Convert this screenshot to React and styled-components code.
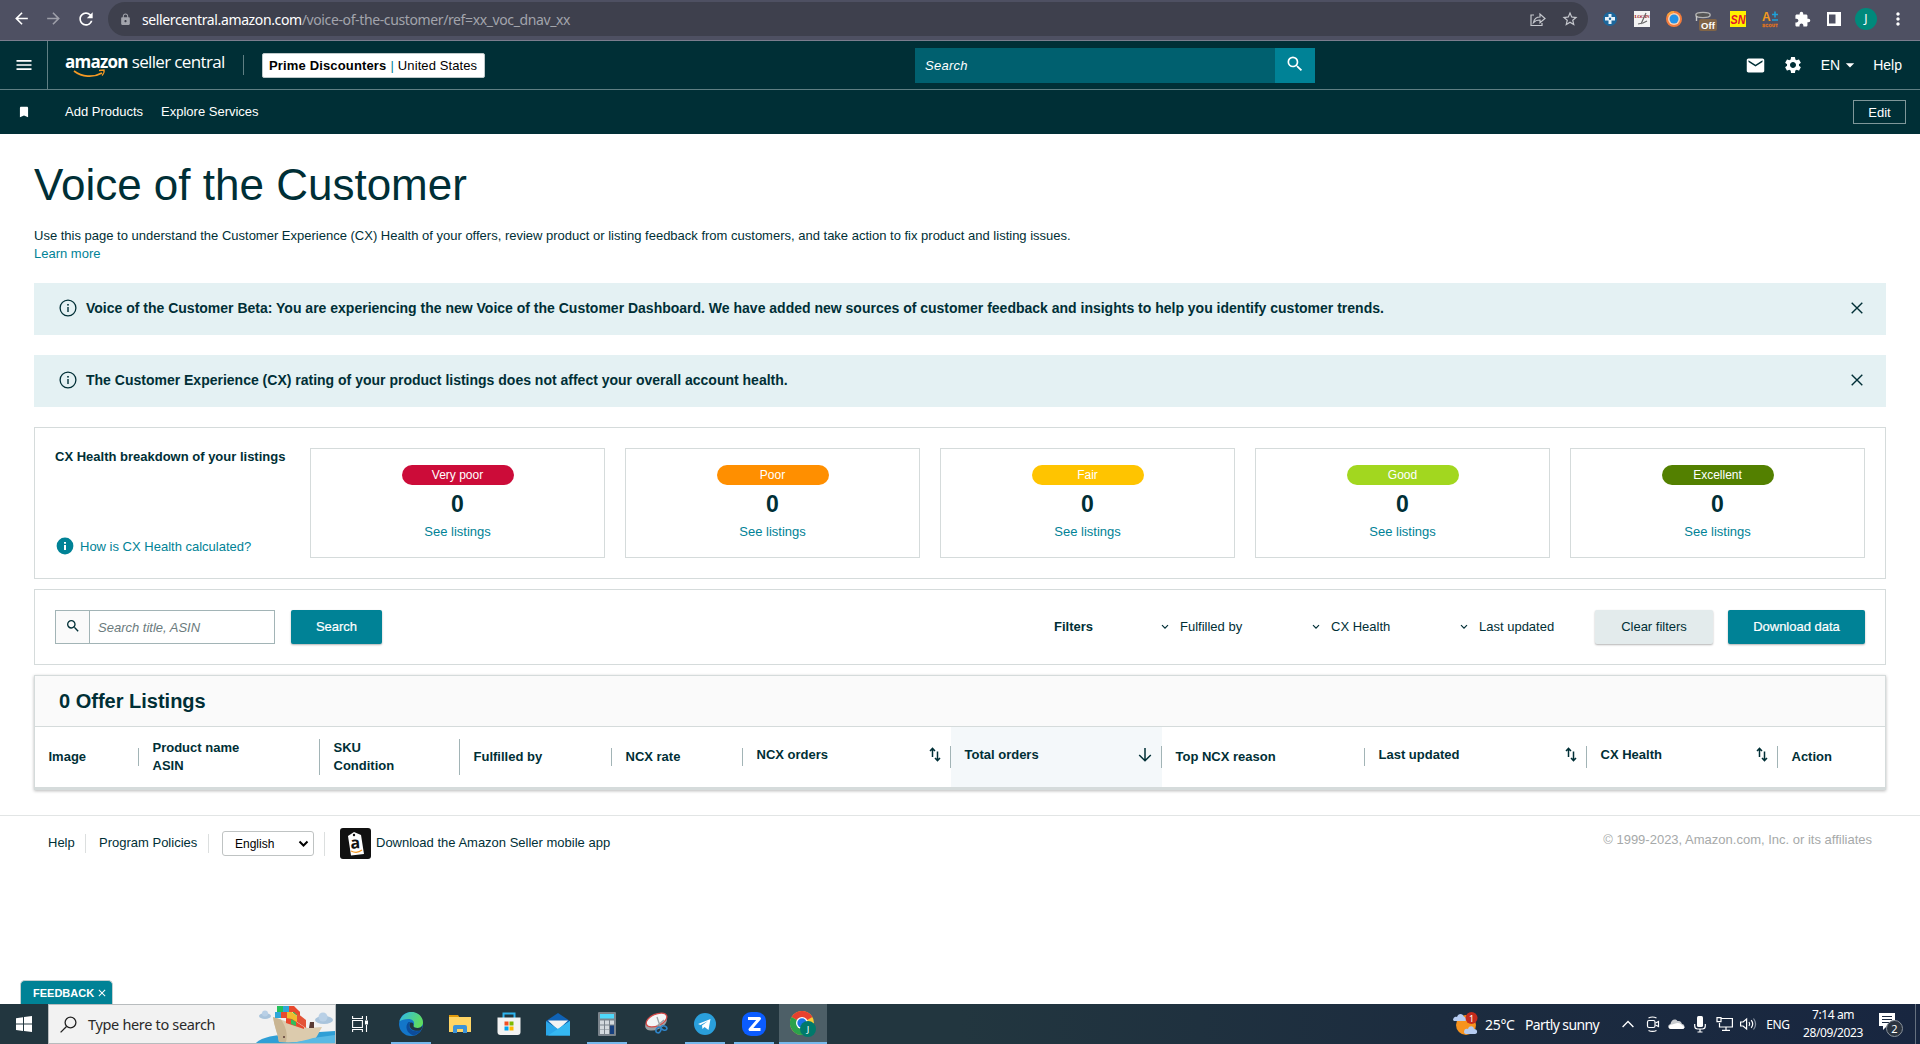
import React from 'react';
import styled, { createGlobalStyle } from 'styled-components';
import {
  MdArrowBack, MdArrowForward, MdRefresh, MdLock, MdStarBorder, MdExtension, MdMoreVert,
  MdMenu, MdBookmark, MdMail, MdSettings, MdSearch, MdArrowDropDown, MdClose,
} from 'react-icons/md';

const Global = createGlobalStyle`
  * { box-sizing: border-box; }
  body { margin: 0; background: #fff; }
  button, input, select { font: inherit; margin: 0; }
  svg { display: block; flex: none; }
`;

const ink = '#002f36';
const teal = '#008296';
const line = '#d5dbdb';
const ui = `"Noto Sans", "Open Sans", sans-serif`;

const Screen = styled.div`
  width: 1920px;
  height: 1044px;
  display: flex;
  flex-direction: column;
  overflow: hidden;
  background: #fff;
  font-family: "Liberation Sans", Arial, sans-serif;
  font-size: 13px;
  color: ${ink};
`;

const T = styled.span`
  white-space: nowrap;
  letter-spacing: ${(p) => p.$ls || 0}px;
  font-weight: ${(p) => (p.$b ? 700 : 'inherit')};
`;

/* ---------- browser bar ---------- */
const BrowserBar = styled.div`
  height: 41px;
  flex: none;
  background: #4e5062;
  border-bottom: 1px solid #7b7d8e;
  display: flex;
  align-items: center;
  padding: 0 0 2px 12px;
  color: #fff;
`;
const NavIcons = styled.div`
  display: flex;
  gap: 13px;
  width: 96px;
`;
const NavIcon = styled.span`
  opacity: ${(p) => (p.$dim ? 0.45 : 1)};
`;
const UrlBar = styled.div`
  width: 1480px;
  flex: none;
  height: 34px;
  border-radius: 17px;
  background: #3e404d;
  display: flex;
  align-items: center;
  padding: 0 9px 0 11px;
  color: #a2a4ac;
  font-family: ${ui};
  font-size: 14px;
`;
const Url = styled.div`
  flex: 1;
  margin-left: 10px;
  white-space: nowrap;
  letter-spacing: ${(p) => p.$ls}px;
  b { font-weight: 400; color: #fff; }
`;
const UrlActions = styled.div`
  display: flex;
  gap: 14px;
  align-items: center;
  color: #c6c8ce;
`;
const Extensions = styled.div`
  flex: none;
  display: flex;
  align-items: center;
  padding-left: 6px;
`;
const Ext = styled.div`
  width: 32px;
  display: flex;
  justify-content: center;
`;
const Avatar = styled.div`
  width: 22px;
  height: 22px;
  border-radius: 50%;
  background: #00897b;
  color: #fff;
  font: 12px/22px ${ui};
  text-align: center;
`;

/* ---------- seller central header ---------- */
const Header = styled.header`
  height: 49px;
  flex: none;
  display: flex;
  align-items: center;
  background: ${ink};
  border-bottom: 1px solid #5f7f83;
  color: #fff;
`;
const MenuButton = styled.div`
  width: 48px;
  height: 48px;
  border-right: 1px solid #5f7f83;
  display: flex;
  align-items: center;
  padding-left: 14px;
`;
const Logo = styled.div`
  width: 178px;
  height: 36px;
  margin-left: 17px;
  padding-top: 1px;
  position: relative;
  font-family: "Open Sans", sans-serif;
  font-size: 17px;
  line-height: 28px;
  white-space: nowrap;
`;
const LogoWord = styled.span`
  font-weight: ${(p) => (p.$b ? 700 : 400)};
  letter-spacing: ${(p) => p.$ls}px;
  margin-right: ${(p) => (p.$b ? 4 : 0)}px;
`;
const Smile = styled.svg`
  position: absolute;
  left: 8px;
  top: 22px;
`;
const LogoDivider = styled.div`
  width: 1px;
  height: 20px;
  background: #5f7f83;
  margin-right: 18px;
`;
const Account = styled.div`
  width: 223px;
  height: 25px;
  background: #fff;
  border: 1px solid #bfc9ca;
  border-radius: 2px;
  color: #000;
  padding-left: 6px;
  line-height: 23px;
  white-space: nowrap;
  font-size: 13px;
  i { font-style: normal; color: ${teal}; margin: 0 4px 0 4px; }
`;
const TopSearch = styled.div`
  margin-left: 430px;
  width: 360px;
  height: 35px;
  background: #00606f;
  padding-left: 10px;
  font-size: 13px;
  letter-spacing: 0.25px;
  font-style: italic;
  line-height: 35px;
`;
const TopSearchButton = styled.div`
  width: 40px;
  height: 35px;
  background: ${teal};
  display: flex;
  align-items: center;
  justify-content: center;
  padding-bottom: 2px;
`;
const HeaderRight = styled.div`
  flex: 1;
  display: flex;
  align-items: center;
  justify-content: flex-end;
  padding-right: 18px;
  font-size: 14px;
`;
const HeaderIcon = styled.span`
  margin-right: ${(p) => p.$mr}px;
`;
const SubNav = styled.nav`
  height: 44px;
  flex: none;
  display: flex;
  align-items: center;
  background: ${ink};
  color: #fff;
  padding: 0 14px 0 17px;
  font-size: 13px;
`;
const SubNavLinks = styled.div`
  flex: 1;
  display: flex;
  gap: 18px;
  margin-left: 34px;
  padding-bottom: 1px;
`;
const EditButton = styled.button`
  width: 53px;
  height: 24px;
  background: transparent;
  border: 1px solid #7f9799;
  color: #fff;
  padding: 0;
  line-height: 21px;
`;

/* ---------- main ---------- */
const Main = styled.main`
  padding: 26px 34px 0;
  flex: none;
`;
const Title = styled.h1`
  margin: 0 0 17px;
  font-size: 44px;
  line-height: 50px;
  font-weight: 400;
  white-space: nowrap;
`;
const Intro = styled.p`
  margin: 0 0 20px;
  line-height: 18px;
`;
const Link = styled.a`
  color: ${teal};
  white-space: nowrap;
`;
const Alert = styled.div`
  height: 52px;
  margin-bottom: 20px;
  background: #e4f1f3;
  display: flex;
  align-items: center;
  padding: 0 23px 3px 25px;
  font-size: 14px;
  font-weight: 700;
`;
const AlertText = styled.div`
  flex: 1;
  margin-left: 9px;
  white-space: nowrap;
`;
const Panel = styled.section`
  border: 1px solid ${line};
  padding: 20px;
  display: flex;
  margin-bottom: 10px;
  height: ${(p) => p.$h}px;
`;
const Breakdown = styled.div`
  width: 255px;
  height: 110px;
  padding: 1px 0 3px;
  display: flex;
  flex-direction: column;
  justify-content: space-between;
`;
const HowLink = styled.div`
  display: flex;
  align-items: center;
  gap: 5px;
`;
const Cards = styled.div`
  flex: 1;
  display: grid;
  grid-template-columns: repeat(5, 1fr);
  gap: 20px;
`;
const Card = styled.div`
  border: 1px solid ${line};
  height: 110px;
  padding-top: 16px;
  display: flex;
  flex-direction: column;
  align-items: center;
`;
const Pill = styled.div`
  width: 112px;
  height: 20px;
  border-radius: 10px;
  background: ${(p) => p.$c};
  color: #fff;
  font-size: 12px;
  line-height: 20px;
  text-align: center;
`;
const Count = styled.div`
  font-size: 23px;
  font-weight: 700;
  line-height: 26px;
  margin: 6px 0 7px;
`;
const Button = styled.button`
  width: ${(p) => p.$w}px;
  height: 34px;
  border: 0;
  border-radius: 2px;
  padding: 0 0 1px;
  margin-left: ${(p) => p.$ml || 0}px;
  background: ${(p) => (p.$light ? '#e3ebec' : teal)};
  color: ${(p) => (p.$light ? ink : '#fff')};
  box-shadow: 0 1px 2px rgba(0, 0, 0, 0.3);
  white-space: nowrap;
  -webkit-text-stroke: ${(p) => (p.$light ? 0 : 0.2)}px #fff;
`;
const SearchField = styled.div`
  display: flex;
  width: 220px;
  height: 34px;
  border: 1px solid #a2b4b6;
  margin-right: 16px;
`;
const SearchAddon = styled.div`
  width: 34px;
  background: #fafafa;
  border-right: 1px solid #a2b4b6;
  display: flex;
  align-items: center;
  justify-content: center;
  padding-bottom: 2px;
`;
const Placeholder = styled.div`
  padding-left: 8px;
  line-height: 33px;
  font-style: italic;
  color: #6b7b7d;
  white-space: nowrap;
`;
const FilterGroup = styled.div`
  flex: 1;
  height: 33px;
  display: flex;
  align-items: center;
  justify-content: flex-end;
`;
const FilterItem = styled.div`
  width: ${(p) => p.$w}px;
  display: flex;
  align-items: center;
  gap: 11px;
`;
const Table = styled.section`
  border: 1px solid ${line};
  border-bottom-width: 3px;
  box-shadow: 0 1px 3px rgba(0, 0, 0, 0.28);
  height: 115px;
`;
const TableTitle = styled.h2`
  margin: 0;
  height: 51px;
  background: #fafafa;
  border-bottom: 1px solid ${line};
  padding-left: 24px;
  font-size: 20px;
  line-height: 51px;
`;
const Columns = styled.div`
  display: grid;
  grid-template-columns: 104px 181px 140px 152px 131px 208px 211px 203px 222px 191px 1fr;
  height: 60px;
  font-weight: 700;
`;
const Cell = styled.div`
  display: flex;
  align-items: center;
  background: ${(p) => (p.$active ? '#f4f8fa' : 'transparent')};
`;
const CellInner = styled.div`
  flex: 1;
  display: flex;
  justify-content: space-between;
  height: ${(p) => p.$h}px;
  line-height: 18px;
  padding: 0 9px 0 13.5px;
  border-right: ${(p) => (p.$last ? 0 : 1)}px solid #a2b4b6;
  white-space: pre;
`;

/* ---------- footer ---------- */
const Footer = styled.footer`
  margin-top: 25px;
  border-top: 1px solid #e2e5e5;
  padding: 11px 48px 0;
  display: flex;
  align-items: center;
  height: 45px;
  flex: none;
`;
const FootItem = styled.div`
  width: ${(p) => p.$w}px;
  height: ${(p) => p.$h || 19}px;
  line-height: 17px;
  border-right: ${(p) => (p.$bar ? 1 : 0)}px solid #dcdfdf;
  white-space: nowrap;
  margin-right: ${(p) => p.$mr || 0}px;
  margin-left: ${(p) => p.$ml || 0}px;
`;
const Language = styled.div`
  width: 92px;
  height: 25px;
  border: 1px solid #bfc3c3;
  border-radius: 3px;
  display: flex;
  align-items: center;
  justify-content: space-between;
  padding: 0 4px 0 12px;
  font-size: 12px;
  color: #000;
`;
const Copyright = styled.div`
  flex: 1;
  text-align: right;
  color: #a6a9a9;
  padding-bottom: 8px;
  white-space: nowrap;
`;
const Filler = styled.div`
  flex: 1;
  position: relative;
`;
const Feedback = styled.div`
  position: absolute;
  left: 20px;
  bottom: 0;
  width: 93px;
  height: 24px;
  background: ${teal};
  border: 1px solid #c5cfd0;
  border-bottom: 0;
  border-radius: 5px 5px 0 0;
  color: #fff;
  font-size: 11px;
  font-weight: 700;
  display: flex;
  align-items: center;
  gap: 2px;
  padding: 0 0 0 12px;
`;

/* ---------- taskbar ---------- */
const Taskbar = styled.div`
  height: 40px;
  flex: none;
  display: flex;
  background: linear-gradient(90deg, #22363f 0%, #22363f 50%, #1c2c3f 75%, #182640 100%);
  color: #fff;
  font-family: ${ui};
`;
const TaskButton = styled.div`
  width: 48px;
  height: 40px;
  display: flex;
  align-items: center;
  justify-content: center;
  margin-left: ${(p) => p.$ml || 0}px;
  position: relative;
  background: ${(p) => (p.$active ? '#4d5f67' : 'transparent')};
`;
const Running = styled.div`
  position: absolute;
  bottom: 0;
  left: ${(p) => (p.$wide ? 0 : 4)}px;
  right: ${(p) => (p.$wide ? 0 : 4)}px;
  height: 2px;
  background: #76b9ed;
`;
const TaskSearch = styled.div`
  width: 288px;
  height: 40px;
  background: #f2f2f2;
  border: 1px solid #b8bcbe;
  display: flex;
  align-items: center;
  padding-left: 11px;
  color: #2a2a2a;
  font-size: 14.5px;
  overflow: hidden;
`;
const TaskSearchText = styled.div`
  flex: 1;
  margin-left: 11px;
  white-space: nowrap;
  letter-spacing: -0.33px;
`;
const Tray = styled.div`
  margin-left: auto;
  display: flex;
  align-items: center;
  font-size: 14px;
  white-space: nowrap;
`;
const TraySlot = styled.div`
  width: ${(p) => p.$w}px;
  display: flex;
  justify-content: ${(p) => (p.$start ? 'flex-start' : 'center')};
  padding-left: ${(p) => p.$pl || 0}px;
  margin-right: ${(p) => p.$mr || 0}px;
  font-size: ${(p) => p.$fs || 14}px;
  letter-spacing: ${(p) => p.$ls || 0}px;
`;
const Clock = styled.div`
  width: 84px;
  text-align: center;
  font-size: 12px;
  line-height: 18px;
  letter-spacing: -0.4px;
`;
const ShowDesktop = styled.div`
  width: 5px;
  height: 40px;
  border-left: 1px solid #65707f;
`;

const SortIcon = () => (
  <svg width="12" height="18" viewBox="0 0 12 18" fill="none" stroke={ink} strokeWidth="1.5">
    <path d="M3.500 11V2.500M1 5l2.500-2.600L6 5M8.500 5.500v9M6 12l2.500 2.600L11 12" />
  </svg>
);
const DownIcon = () => (
  <svg width="14" height="18" viewBox="0 0 14 18" fill="none" stroke={ink} strokeWidth="1.5">
    <path d="M7 2v12.500M1.200 9L7 14.800 12.800 9" />
  </svg>
);
const Chevron = () => (
  <svg width="8" height="6" viewBox="0 0 8 6" fill="none" stroke={ink} strokeWidth="1.2"><path d="M1 1.200l3 3 3-3" /></svg>
);
const Close = () => (
  <svg width="12" height="12" viewBox="0 0 12 12" stroke={ink} strokeWidth="1.4"><path d="M.7.7l10.600 10.600M11.300.7L.7 11.300" /></svg>
);
const InfoOutline = () => (
  <svg width="18" height="18" viewBox="0 0 18 18" fill="none">
    <circle cx="9" cy="9" r="7.900" stroke={ink} strokeWidth="1.300" />
    <path d="M9 8v5" stroke={ink} strokeWidth="1.400" /><rect x="8.200" y="5" width="1.600" height="1.600" fill={ink} />
  </svg>
);
const InfoSolid = () => (
  <svg width="20" height="18" viewBox="0 0 20 18">
    <circle cx="10" cy="9" r="8.400" fill={teal} />
    <path d="M9 5h2v1.800H9zM9 8h2v5H9z" fill="#fff" />
  </svg>
);

const ShareIcon = () => (
  <svg width="18" height="16" viewBox="0 0 18 16" fill="none" stroke="currentColor" strokeWidth="1.200">
    <path d="M5 4H2v10.500h11V12M4.500 11.500c.8-4 3-5.500 6.500-5.500V3l5 4.500-5 4.200V9c-3 0-5 .8-6.500 2.500z" />
  </svg>
);

const extensions = [
  <svg width="16" height="16" viewBox="0 0 16 16">
    <circle cx="8" cy="8" r="7" fill="#1c679c" />
    <path d="M6.500 3h3v3h3.500v3.500H9.500v3.500h-3V9.500H3V6h3.500z" fill="#e8f3fa" /><circle cx="8" cy="7.800" r="1.200" fill="#1c679c" />
  </svg>,
  <svg width="16" height="16" viewBox="0 0 16 16">
    <rect width="16" height="16" fill="#f3f3f3" />
    <text x="0.500" y="7" fontSize="5" fontWeight="700" fill="#a01818" textLength="15" fontFamily="Liberation Serif, serif">LOG IN</text>
    <path d="M12 2L7 13M4 13l5-1 4-2" stroke="#666" strokeWidth="1.200" fill="none" />
  </svg>,
  <svg width="16" height="16" viewBox="0 0 16 16">
    <circle cx="8" cy="8" r="8" fill="#f47c3c" /><circle cx="8" cy="8" r="6" fill="#fbd3b5" /><circle cx="8" cy="8" r="4.500" fill="#2492e6" /><path d="M1 4a8 8 0 0 1 7-4v2a7 7 0 0 0-6 4z" fill="#f8a33c" />
  </svg>,
  <svg width="22" height="24" viewBox="0 0 22 24">
    <ellipse cx="8" cy="8" rx="7.200" ry="2.600" fill="#555" stroke="#b4b4b4" strokeWidth="1.400" />
    <path d="M1.500 9v5" stroke="#c9c9c9" strokeWidth="1.400" />
    <rect x="4" y="12" width="18" height="12" rx="2" fill="#806447" />
    <text x="6" y="21.500" fontSize="9.500" fontWeight="700" fill="#fff" textLength="14" fontFamily="Liberation Sans, sans-serif">Off</text>
  </svg>,
  <svg width="16" height="16" viewBox="0 0 16 16">
    <rect width="16" height="16" fill="#fff200" />
    <text x="0.500" y="12.500" fontSize="12" fontWeight="700" fontStyle="italic" fill="#e3142b" textLength="15" lengthAdjust="spacingAndGlyphs" fontFamily="Liberation Sans, sans-serif">SN</text>
  </svg>,
  <svg width="16" height="20" viewBox="0 0 16 20">
    <text x="0" y="12" fontSize="12" fontWeight="700" fill="#f39a1f" fontFamily="Liberation Sans, sans-serif">A</text>
    <path d="M10 5.500h6M13 2.500v6M10 11h6" stroke="#1fa0d8" strokeWidth="1.600" />
    <text x="0.300" y="17.800" fontSize="4" fontWeight="700" fill="#e0741c" stroke="#e0741c" strokeWidth="0.300" textLength="15.400" fontFamily="Liberation Sans, sans-serif">SCOUT</text>
  </svg>,
  <MdExtension size={17} />,
  <svg width="14" height="14" viewBox="0 0 14 14"><path d="M0 0h14v14H0zM2 2.500v9h6.500v-9z" fill="#fff" fillRule="evenodd" /></svg>,
  <Avatar>J</Avatar>,
  <MdMoreVert size={20} />,
];

const Ship = () => (
  <svg width="80" height="39" viewBox="0 0 80 39">
    <ellipse cx="10" cy="11" rx="6" ry="3" fill="#a9c4dc" /><circle cx="10" cy="8.500" r="3" fill="#b9d0e6" />
    <ellipse cx="69" cy="15" rx="9" ry="4" fill="#a9c4dc" /><circle cx="68" cy="12" r="4.500" fill="#b9d0e6" />
    <path d="M0 39C6 32 20 30 34 29l46-3v13z" fill="#2f9fd6" />
    <path d="M18 12l12 4 14 4 9 3 14-1c-3 5-4 8-7 12-12 3-24 4-36 3-1-8-5-16-6-25z" fill="#dccbad" />
    <path d="M18 12l8 2.500c5 7 7 15 5 22.500h-7c-1-8-5-16-6-25z" fill="#c9b593" />
    <path d="M22 1h6v6h-6zM38 2l7 5v6l-7-5z" fill="#23c15a" />
    <path d="M28 1h6v6h-6z" fill="#2ea6d9" /><path d="M34 1h5l6 6v6l-6-6h-5z" fill="#e8492e" />
    <path d="M20 7h6v6h-6z" fill="#2ea6d9" /><path d="M26 7h6v6h-6z" fill="#e8492e" /><path d="M32 7h5l5 4v7l-6-4h-4z" fill="#f0bb2e" />
    <path d="M31 13l6 1 12 8v2l-12-4-6-2z" fill="#e8492e" /><path d="M42 8l9 7v8l-9-6z" fill="#e35336" /><path d="M36 14l5 3v4l-5-2z" fill="#2fbf5b" />
    <path d="M55 17h4v6h-5z" fill="#5a3b34" /><circle cx="29" cy="32" r="1" fill="#5a3b34" />
    <path d="M20 39c16 0 28-3 38-6l22-3v9z" fill="#58b9e4" />
  </svg>
);
const EdgeIcon = () => (
  <svg width="24" height="24" viewBox="0 0 24 24">
    <defs><linearGradient id="edg" x1="0" x2="1" y1="0" y2=".4"><stop offset="0" stopColor="#2fb7ee" /><stop offset="1" stopColor="#5fdc60" /></linearGradient></defs>
    <circle cx="12" cy="12" r="12" fill="#1376c9" />
    <path d="M.5 9.500C2 4 6.500 0 12.500 0 19 0 24 5 24 10.500c0 3.500-2.500 5.500-5.500 5.500-3 0-4.500-1.200-4-2.500 1.500-2.500.2-6.500-5-6.500C5.500 7 2 8 .5 9.500z" fill="url(#edg)" />
    <path d="M9.500 10c-4 4-2 11.500 5 13.500 3-.7 6-2.500 7.800-5.500-5 2.500-11.500 1-12-4-.1-1.500.2-3 1.200-4z" fill="#0c4c9b" />
    <path d="M14.500 13.500c-.5 1.300 1 2.500 4 2.500 2 0 4-.8 5-2.500-.3 2-.8 3.500-1.500 4.500-4 2-11.500.5-11.500-5 0-1 .5-2 1-2.500 2-.5 3.500 1 3 3z" fill="#22363f" />
  </svg>
);
const FolderIcon = () => (
  <svg width="22" height="20" viewBox="0 0 22 20">
    <path d="M0 1h9l2 3H0z" fill="#e09a0c" /><path d="M0 3h22v15H0z" fill="#ffd565" />
    <path d="M4 19v-6q0-2 2-2h10q2 0 2 2v6h-4v-4H8v4z" fill="#3b93d9" />
  </svg>
);
const StoreIcon = () => (
  <svg width="24" height="24" viewBox="0 0 24 24">
    <path d="M6.500 6V1.500h11V6" fill="none" stroke="#2fb4ee" strokeWidth="2" />
    <path d="M.5 5.500h23V20q0 3-3 3h-17q-3 0-3-3z" fill="#f3f3f3" />
    <path d="M7.500 9.500h4v4h-4z" fill="#f25022" /><path d="M12.500 9.500h4v4h-4z" fill="#7fba00" />
    <path d="M7.500 14.500h4v4h-4z" fill="#00a4ef" /><path d="M12.500 14.500h4v4h-4z" fill="#ffb900" />
  </svg>
);
const MailIcon = () => (
  <svg width="24" height="23" viewBox="0 0 24 23">
    <path d="M0 8L12 0l12 8-12 8z" fill="#0f62b5" /><path d="M2 7.500h20L12 17z" fill="#f4f4f4" />
    <path d="M0 8l12 8L24 8v14.500H0z" fill="#2aa7ea" /><path d="M24 8L2 22.500h22z" fill="#35b8f2" />
  </svg>
);
const CalcIcon = () => (
  <svg width="18" height="24" viewBox="0 0 18 24">
    <rect width="18" height="24" rx="1" fill="#7b848c" /><path d="M2 2h14v4.500H2z" fill="#4fd8fb" />
    <path d="M2 8.500h4v4H2zM7 8.500h4v4H7zM12 8.500h4v4h-4zM2 13.500h4v4H2zM7 13.500h4v4H7zM2 18h4v4H2zM7 18h4v4H7z" fill="#d4dade" />
    <path d="M12 13.500h4V22h-4z" fill="#17407f" />
  </svg>
);
const SnipIcon = () => (
  <svg width="24" height="24" viewBox="0 0 24 24">
    <ellipse cx="12" cy="11" rx="11.500" ry="6.500" transform="rotate(-24 12 11)" fill="#9ba1a5" />
    <ellipse cx="12.500" cy="8" rx="11" ry="5.800" transform="rotate(-24 12.500 8)" fill="#f4f5f6" stroke="#d44a48" strokeWidth="1.300" />
    <path d="M13 5l3 9M20 8l-7 6" stroke="#9ba1a5" strokeWidth="1.300" />
    <g fill="none" stroke="#2f84c8" strokeWidth="1.600"><ellipse cx="14.500" cy="18" rx="2.300" ry="3" transform="rotate(30 14.500 18)" /><ellipse cx="20" cy="16" rx="3" ry="2" transform="rotate(20 20 16)" /></g>
  </svg>
);
const TelegramIcon = () => (
  <svg width="22" height="22" viewBox="0 0 22 22"><circle cx="11" cy="11" r="11" fill="#2a9fdb" /><path d="M4 11l12.500-5-2 11-4-3-2 2-.5-3.500L14 8l-7.500 4z" fill="#fff" /></svg>
);
const ZoomIcon = () => (
  <svg width="24" height="24" viewBox="0 0 24 24"><rect width="24" height="24" rx="9" fill="#0b5cff" /><path d="M6 6.500h11.500L8 17.500h10.500" fill="none" stroke="#fff" strokeWidth="3" strokeLinejoin="round" /></svg>
);
const ChromeIcon = () => (
  <svg width="26" height="26" viewBox="0 0 26 26">
    <circle cx="12" cy="12" r="12" fill="#fcc934" />
    <path d="M12 12L1.600 6A12 12 0 0 1 22.400 6z" fill="#e8402f" /><path d="M12 12L1.600 6A12 12 0 0 0 12 24l4-9z" fill="#2ba24c" />
    <circle cx="12" cy="12" r="6" fill="#fff" /><circle cx="12" cy="12" r="4.700" fill="#1a73e8" />
    <circle cx="18" cy="18" r="8" fill="#00796b" />
    <text x="18" y="21.500" fontSize="9.500" fill="#fff" textAnchor="middle" fontFamily="Noto Sans, sans-serif">J</text>
  </svg>
);
const TaskViewIcon = () => (
  <svg width="16" height="16" viewBox="0 0 16 16" fill="none" stroke="#fff" strokeWidth="1.100"><path d="M.6 0v2.500h9.800V0M.6 16v-2.500h9.800V16M.6 4.500h9.800v7H.6zM14.500 0v4M14.500 9v7" /><path d="M13.500 5h2v3h-2z" fill="#fff" /></svg>
);
const WindowsIcon = () => (
  <svg width="16" height="16" viewBox="0 0 16 16" fill="#fff"><path d="M0 2.200L7 1.200v6.400H0zM8 1.100L16 0v7.600H8zM0 8.500h7V15l-7-1zM8 8.500h8V16l-8-1.100z" /></svg>
);

const cards = [
  ['Very poor', '#cc0c39'], ['Poor', '#ff8f00'], ['Fair', '#ffc400'], ['Good', '#a2d71f'], ['Excellent', '#538000'],
];
const columns = [
  { t: 'Image', h: 18 }, { t: 'Product name\nASIN', h: 36 }, { t: 'SKU\nCondition', h: 36 }, { t: 'Fulfilled by', h: 18 },
  { t: 'NCX rate', h: 18 }, { t: 'NCX orders', h: 22, icon: <SortIcon /> }, { t: 'Total orders', h: 22, icon: <DownIcon />, active: true },
  { t: 'Top NCX reason', h: 18 }, { t: 'Last updated', h: 22, icon: <SortIcon /> }, { t: 'CX Health', h: 22, icon: <SortIcon /> },
  { t: 'Action', h: 18, last: true },
];
const apps = [
  [EdgeIcon, 1], [FolderIcon], [StoreIcon], [MailIcon], [CalcIcon, 1], [SnipIcon], [TelegramIcon, 1], [ZoomIcon, 1], [ChromeIcon, 2],
];

export default function App() {
  return (
    <Screen>
      <Global />
      <BrowserBar>
        <NavIcons>
          <NavIcon><MdArrowBack size={19} /></NavIcon>
          <NavIcon $dim><MdArrowForward size={19} /></NavIcon>
          <NavIcon><MdRefresh size={20} /></NavIcon>
        </NavIcons>
        <UrlBar>
          <MdLock size={13} />
          <Url $ls={-0.38}><b>sellercentral.amazon.com</b>/voice-of-the-customer/ref=xx_voc_dnav_xx</Url>
          <UrlActions><ShareIcon /><MdStarBorder size={18} /></UrlActions>
        </UrlBar>
        <Extensions>{extensions.map((e, i) => <Ext key={i}>{e}</Ext>)}</Extensions>
      </BrowserBar>

      <Header>
        <MenuButton><MdMenu size={20} /></MenuButton>
        <Logo>
          <LogoWord $b $ls={-0.75}>amazon</LogoWord><LogoWord $ls={-0.65}>seller central</LogoWord>
          <Smile width="34" height="10" viewBox="0 0 34 10" fill="none" stroke="#f59a24" strokeWidth="1.700">
            <path d="M1 2c8 6 19 7 28 2" /><path d="M26 1.500l5-.5c.5 2-.5 4-2 5.500" strokeWidth="1.300" />
          </Smile>
        </Logo>
        <LogoDivider />
        <Account><T $b $ls={0.15}>Prime Discounters</T><i>|</i><T $ls={0.1}>United States</T></Account>
        <TopSearch>Search</TopSearch>
        <TopSearchButton><MdSearch size={20} /></TopSearchButton>
        <HeaderRight>
          <HeaderIcon $mr={17}><MdMail size={21} /></HeaderIcon>
          <HeaderIcon $mr={18}><MdSettings size={20} /></HeaderIcon>
          <T>EN</T>
          <HeaderIcon $mr={13}><MdArrowDropDown size={20} /></HeaderIcon>
          <T>Help</T>
        </HeaderRight>
      </Header>
      <SubNav>
        <MdBookmark size={14} />
        <SubNavLinks><T>Add Products</T><T>Explore Services</T></SubNavLinks>
        <EditButton>Edit</EditButton>
      </SubNav>

      <Main>
        <Title>Voice of the Customer</Title>
        <Intro>
          <T>Use this page to understand the Customer Experience (CX) Health of your offers, review product or listing feedback from customers, and take action to fix product and listing issues.</T>
          <br />
          <Link>Learn more</Link>
        </Intro>
        <Alert>
          <InfoOutline />
          <AlertText>Voice of the Customer Beta: You are experiencing the new Voice of the Customer Dashboard. We have added new sources of customer feedback and insights to help you identify customer trends.</AlertText>
          <Close />
        </Alert>
        <Alert>
          <InfoOutline />
          <AlertText>The Customer Experience (CX) rating of your product listings does not affect your overall account health.</AlertText>
          <Close />
        </Alert>
        <Panel $h={152}>
          <Breakdown>
            <T $b>CX Health breakdown of your listings</T>
            <HowLink><InfoSolid /><Link>How is CX Health calculated?</Link></HowLink>
          </Breakdown>
          <Cards>
            {cards.map(([name, c]) => (
              <Card key={name}>
                <Pill $c={c}>{name}</Pill>
                <Count>0</Count>
                <Link>See listings</Link>
              </Card>
            ))}
          </Cards>
        </Panel>
        <Panel $h={76}>
          <SearchField>
            <SearchAddon><MdSearch size={16} /></SearchAddon>
            <Placeholder>Search title, ASIN</Placeholder>
          </SearchField>
          <Button $w={91}>Search</Button>
          <FilterGroup>
            <FilterItem $w={107}><T $b>Filters</T></FilterItem>
            <FilterItem $w={151}><Chevron /><T>Fulfilled by</T></FilterItem>
            <FilterItem $w={148}><Chevron /><T>CX Health</T></FilterItem>
            <FilterItem $w={135}><Chevron /><T>Last updated</T></FilterItem>
            <Button $light $w={118}>Clear filters</Button>
            <Button $w={137} $ml={15}>Download data</Button>
          </FilterGroup>
        </Panel>
        <Table>
          <TableTitle>0 Offer Listings</TableTitle>
          <Columns>
            {columns.map((c) => (
              <Cell key={c.t} $active={c.active}>
                <CellInner $h={c.h} $last={c.last}>{c.t}{c.icon}</CellInner>
              </Cell>
            ))}
          </Columns>
        </Table>
      </Main>

      <Footer>
        <FootItem $w={38} $bar $mr={13}>Help</FootItem>
        <FootItem $w={110} $bar $mr={13}>Program Policies</FootItem>
        <Language>
          English
          <svg width="11" height="8" viewBox="0 0 11 8" fill="none" stroke="#000" strokeWidth="2"><path d="M1.500 1.500l4 4 4-4" /></svg>
        </Language>
        <FootItem $w={11} $h={24} $bar $mr={15} />
        <svg width="31" height="31" viewBox="0 0 31 31">
          <rect width="31" height="31" rx="3" fill="#111" />
          <path d="M8 8l6-4 7 3 3 19-13 1.500z" fill="#fff" /><circle cx="14" cy="7" r="1.200" fill="#111" />
          <text x="10.500" y="20.500" fontSize="16" fontWeight="700" fill="#111" transform="rotate(-4 15 18)" fontFamily="Open Sans, sans-serif">a</text>
          <path d="M11 23c4 2 8 1.500 11-1" stroke="#f59a24" strokeWidth="1.300" fill="none" />
        </svg>
        <FootItem $w={240} $ml={5}>Download the Amazon Seller mobile app</FootItem>
        <Copyright>© 1999-2023, Amazon.com, Inc. or its affiliates</Copyright>
      </Footer>
      <Filler>
        <Feedback><T>FEEDBACK</T><MdClose size={12} /></Feedback>
      </Filler>

      <Taskbar>
        <TaskButton><WindowsIcon /></TaskButton>
        <TaskSearch>
          <svg width="17" height="17" viewBox="0 0 17 17" fill="none" stroke="#222" strokeWidth="1.300"><circle cx="10.500" cy="6.500" r="5.400" /><path d="M6.500 10.500L.6 16.400" /></svg>
          <TaskSearchText>Type here to search</TaskSearchText>
          <Ship />
        </TaskSearch>
        <TaskButton><TaskViewIcon /></TaskButton>
        {apps.map(([Icon, run], i) => (
          <TaskButton key={i} $ml={i ? 1 : 3} $active={run === 2}>
            <Icon />
            {run && <Running $wide={run === 2} />}
          </TaskButton>
        ))}
        <Tray>
          <TraySlot $w={34} $start $pl={2}>
            <svg width="26" height="24" viewBox="0 0 26 24">
              <circle cx="13" cy="13" r="10" fill="#f7931e" /><path d="M0 8c0-3 3-4 4-3 1-4 6-4 7 0 3 0 3 4 1 4H1z" fill="#b5cbf0" />
              <path d="M11 20c0-3 2-4 4-3 1-4 6-3 6 0 4 0 4 5 1 5H13c-1 0-2-1-2-2z" fill="#b5cbf0" />
              <circle cx="18.500" cy="6" r="6" fill="#c42b1c" /><text x="18.500" y="9.500" fontSize="9" fill="#fff" textAnchor="middle" fontFamily="Noto Sans, sans-serif">1</text>
            </svg>
          </TraySlot>
          <TraySlot $w={40} $start $ls={-0.3}>25°C</TraySlot>
          <TraySlot $w={90} $start $ls={-0.6}>Partly sunny</TraySlot>
          <TraySlot $w={26}><svg width="12" height="8" viewBox="0 0 12 8" fill="none" stroke="#fff" strokeWidth="1.300"><path d="M.6 7L6 1.500 11.400 7" /></svg></TraySlot>
          <TraySlot $w={24}><svg width="14" height="16" viewBox="0 0 14 16" fill="none" stroke="#fff" strokeWidth="1.200"><rect x="1.500" y="4.500" width="7.500" height="7" rx="1.500" /><path d="M9.500 7l3-1.500v5l-3-1.500M2.500 2q4-2 8 0M2.500 14.500q4 1.800 8 0" /></svg></TraySlot>
          <TraySlot $w={23}><svg width="17" height="12" viewBox="0 0 17 12"><path d="M3 11c-3 0-4-4-.5-5C3 2 7 0 9.500 3c3-.5 4 1 4.500 3 3 0 3.500 5 0 5z" fill="#c9ccd0" /><path d="M3 11c-3 0-3-4 1-4.500C7 6 8 5 9.500 5c3 0 4 2 7 4 0 1-1 2-2.500 2z" fill="#fff" /></svg></TraySlot>
          <TraySlot $w={24}><svg width="12" height="17" viewBox="0 0 12 17"><rect x="3" width="6" height="11" rx="1.500" fill="#fff" /><path d="M.7 8v2q0 3 3 3h4.600q3 0 3-3V8M6 13v3M3.500 16h5" fill="none" stroke="#fff" strokeWidth="1.200" /></svg></TraySlot>
          <TraySlot $w={24}><svg width="17" height="14" viewBox="0 0 17 14" fill="none" stroke="#fff" strokeWidth="1.200"><path d="M5 1.500h11.400v8.500H3.500V6M1 .6h4v4H1zM10 10v3M6 13.300h8" /></svg></TraySlot>
          <TraySlot $w={24} $mr={5}><svg width="17" height="14" viewBox="0 0 17 14" fill="none" stroke="#fff" strokeWidth="1.200"><path d="M.6 5h2.500l3.500-3v10L3.100 9H.6zM9 5q1.500 2 0 4M11.200 3.200q3 3.800 0 7.600" /><path d="M13.500 1.500q4.200 5.500 0 11" stroke="#8a94a3" /></svg></TraySlot>
          <TraySlot $w={26} $fs={12} $ls={-0.3}>ENG</TraySlot>
          <Clock>7:14 am<br />28/09/2023</Clock>
          <TraySlot $w={40} $start $pl={4}>
            <svg width="26" height="25" viewBox="0 0 26 25">
              <path d="M0 1h16v13h-8l-4 4v-4H0z" fill="#fff" /><path d="M3 4.500h10M3 7.500h10M3 10.500h7" stroke="#1a2940" strokeWidth="1.100" />
              <circle cx="15.500" cy="16.500" r="8" fill="#2b3440" stroke="#8a929b" strokeWidth="1" />
              <text x="15.500" y="20.500" fontSize="11" fill="#fff" textAnchor="middle" fontFamily="Noto Sans, sans-serif">2</text>
            </svg>
          </TraySlot>
          <ShowDesktop />
        </Tray>
      </Taskbar>
    </Screen>
  );
}
